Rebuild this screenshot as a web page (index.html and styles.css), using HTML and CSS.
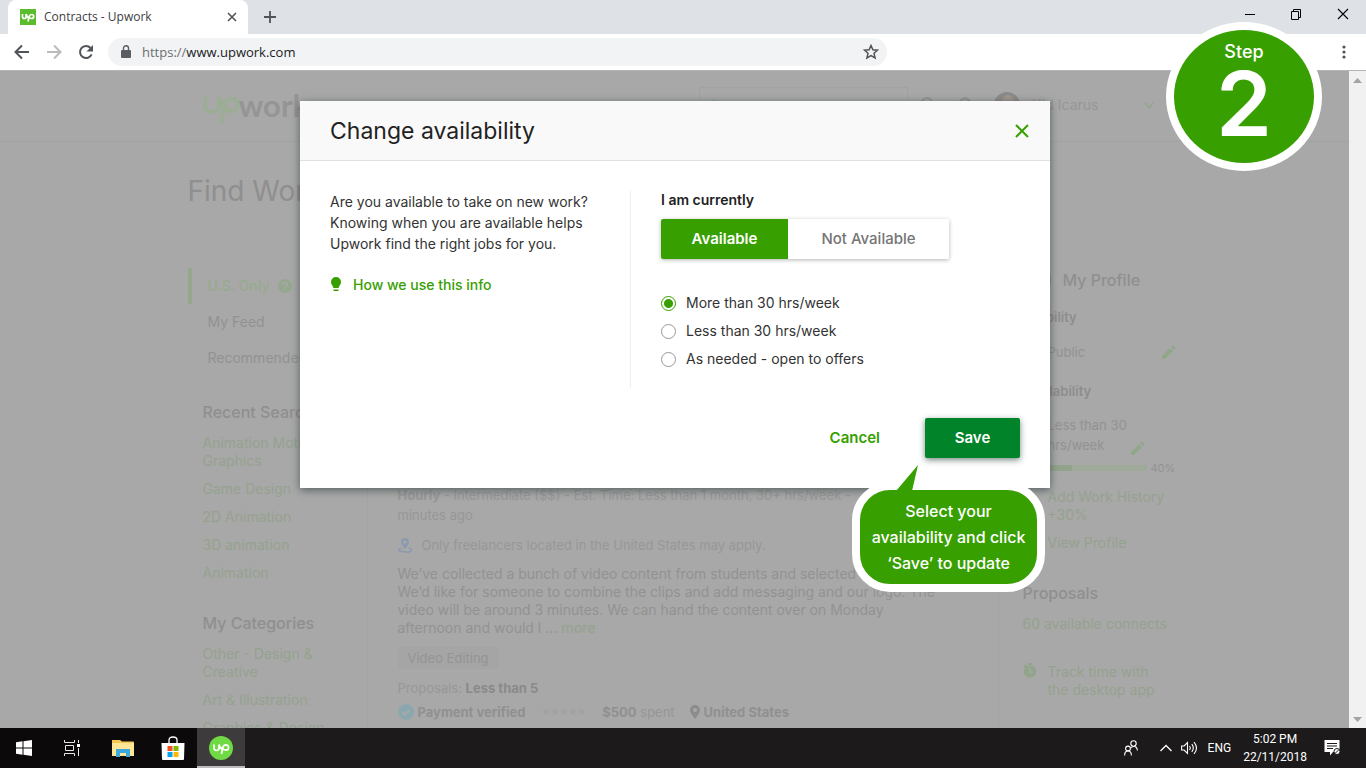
FILE: index.html
```html
<!DOCTYPE html>
<html lang="en">
<head>
<meta charset="utf-8">
<meta name="viewport" content="width=device-width, initial-scale=1">
<title>Contracts - Upwork</title>
<link rel="stylesheet" href="styles.css">
</head>
<body>
<div class="screen">
  <div class="tabstrip">
    <div class="tab">
      <svg class="favicon" viewBox="0 0 16 16" aria-hidden="true"><rect width="16" height="16" fill="#5bbc2e"/><path d="M2.500 5v2.700q0 1.800 1.800 1.800t1.800-1.800V5q.8 2.500 2.600 4.300M8 12.500l1.200-5q.5-2 2.500-2t2 2-2 2q-1.600 0-3.200-1.800" fill="none" stroke="#fff" stroke-width="1.700"/></svg>
      <span class="tab-title">Contracts - Upwork</span>
      <button class="icon-button" aria-label="Close tab"><svg width="10" height="10" viewBox="0 0 10 10"><path d="M1 1l8 8M9 1L1 9" stroke="#505357" stroke-width="1.600"/></svg></button>
    </div>
    <button class="icon-button new-tab" aria-label="New tab"><svg width="12" height="12" viewBox="0 0 12 12"><path d="M6 0v12M0 6h12" stroke="#505357" stroke-width="1.800"/></svg></button>
    <div class="window-controls">
      <button class="icon-button" aria-label="Minimize"><svg width="10" height="12" viewBox="0 0 10 12"><path d="M0 6.500h10" stroke="#000"/></svg></button>
      <button class="icon-button" aria-label="Restore"><svg width="12" height="12" viewBox="0 0 12 12"><path d="M1.500 3.500h7v8h-7zM3.500 3V1.500h7v8H9" fill="none" stroke="#000"/></svg></button>
      <button class="icon-button" aria-label="Close"><svg width="12" height="12" viewBox="0 0 12 12"><path d="M1 1l10 10M11 1L1 11" stroke="#000" stroke-width="1.100"/></svg></button>
    </div>
  </div>
  <div class="toolbar">
    <button class="icon-button" aria-label="Back"><svg width="16" height="16" viewBox="0 0 16 16"><path d="M15 8H2M8 1.500L1.500 8 8 14.500" fill="none" stroke="#505357" stroke-width="2"/></svg></button>
    <button class="icon-button" aria-label="Forward"><svg width="16" height="16" viewBox="0 0 16 16"><path d="M1 8h13M8 1.500L14.500 8 8 14.500" fill="none" stroke="#b9bbbd" stroke-width="2"/></svg></button>
    <button class="icon-button" aria-label="Reload"><svg width="16" height="16" viewBox="0 0 16 16"><path d="M13.600 10.300A6 6 0 1 1 12.500 4" fill="none" stroke="#505357" stroke-width="2"/><path d="M15 1v6.500H8.500z" fill="#505357"/></svg></button>
    <div class="omnibox">
      <svg width="10" height="14" viewBox="0 0 10 14" aria-hidden="true"><path d="M1 5h8q1 0 1 1v6q0 1-1 1H1q-1 0-1-1V6q0-1 1-1z" fill="#5a5d61"/><path d="M2.500 5.500V3.200a2.500 2.500 0 0 1 5 0v2.300" fill="none" stroke="#5a5d61" stroke-width="1.400"/></svg>
      <label class="scheme" for="url">https://</label><input class="url" id="url" type="text" value="www.upwork.com">
      <button class="icon-button" aria-label="Bookmark"><svg width="16" height="16" viewBox="0 0 16 16"><path d="M8 1.500l1.900 4.300 4.600.4L11 9.300l1.100 4.600L8 11.500l-4.100 2.400L5 9.300 1.500 6.200l4.600-.4z" fill="none" stroke="#505357" stroke-width="1.500"/></svg></button>
    </div>
    <button class="icon-button menu" aria-label="Menu"><svg width="4" height="14" viewBox="0 0 4 14"><g fill="#505357"><circle cx="2" cy="2" r="1.600"/><circle cx="2" cy="7" r="1.600"/><circle cx="2" cy="12" r="1.600"/></g></svg></button>
  </div>

  <div class="viewport">
    <div class="page">
      <header class="site-header">
        <div class="container header-row">
          <div class="logo"><svg class="logo-up" width="36" height="30" viewBox="0 0 36 30" aria-label="up"><path d="M2 4v8q0 7 7 7t7-7V4q3 10 9 14.500" fill="none" stroke="#9bad94" stroke-width="4"/><path d="M18 30l3.500-17q1.500-7 7-7t6 6-6 6q-5 0-11-7" fill="none" stroke="#9bad94" stroke-width="4"/></svg><span>work</span></div>
          <div class="header-search"><svg width="14" height="14" viewBox="0 0 14 14"><circle cx="6" cy="6" r="4.500" fill="none" stroke="#96a78f" stroke-width="2"/></svg></div>
          <svg width="18" height="18" viewBox="0 0 18 18"><path d="M4 16V7a5 5 0 0 1 10 0v4" fill="none" stroke="#929292" stroke-width="2"/></svg>
          <svg width="18" height="18" viewBox="0 0 18 18"><path d="M3 14V9q0-5 6-7 6 2 6 7v5" fill="none" stroke="#929292" stroke-width="2"/></svg>
          <svg class="avatar" width="26" height="26" viewBox="0 0 26 26"><circle cx="13" cy="13" r="13" fill="#8b8b8b"/><ellipse cx="14" cy="10" rx="6" ry="7" fill="#a1978f"/></svg>
          <span class="user">Kid Icarus</span>
          <svg width="10" height="7" viewBox="0 0 10 7"><path d="M1 1l4 5 4-5" fill="none" stroke="#95a38d" stroke-width="1.500"/></svg>
        </div>
      </header>
      <div class="container">
        <h1 class="page-title">Find Work</h1>
        <div class="columns">
          <nav class="sidebar">
            <a class="feed active" href="#">U.S. Only <svg width="14" height="14" viewBox="0 0 14 14" aria-hidden="true"><circle cx="7" cy="7" r="7" fill="#95a78d"/><path d="M4.800 5.600q0-2.200 2.200-2.200t2.200 1.900q0 1-1.200 1.600T7 8.500M7 9.600v1.700" fill="none" stroke="#a8a8a8" stroke-width="1.500"/></svg></a>
            <a class="feed" href="#">My Feed</a>
            <a class="feed" href="#">Recommended</a>
            <section class="side-group">
              <h2>Recent Searches</h2>
              <a href="#">Animation Motion Graphics</a>
              <a href="#">Game Design</a>
              <a href="#">2D Animation</a>
              <a href="#">3D animation</a>
              <a href="#">Animation</a>
            </section>
            <section class="side-group">
              <h2>My Categories</h2>
              <a href="#">Other - Design &amp; Creative</a>
              <a href="#">Art &amp; Illustration</a>
              <a href="#">Graphics &amp; Design</a>
            </section>
          </nav>
          <main class="feed-column">
            <p class="meta"><strong>Hourly</strong> - Intermediate ($$) - Est. Time: Less than 1 month, 30+ hrs/week - <br>minutes ago</p>
            <p class="location"><svg width="14" height="15" viewBox="0 0 14 15" aria-hidden="true"><path d="M7 11Q3 6.500 3 4a4 4 0 0 1 8 0q0 2.500-4 7z" fill="#8b9aae"/><circle cx="7" cy="4" r="1.600" fill="#a8a8a8"/><path d="M3.500 10Q.8 10.600.8 12T7 13.900 13.200 12q0-1.400-2.700-2" fill="none" stroke="#8b9aae" stroke-width="1.600"/></svg>Only freelancers located in the United States may apply.</p>
            <p class="description">We’ve collected a bunch of video content from students and selected<br>We’d like for someone to combine the clips and add messaging and our logo. The<br>video will be around 3 minutes. We can hand the content over on Monday<br>afternoon and would l ... <a href="#">more</a></p>
            <span class="chip">Video Editing</span>
            <p class="proposals">Proposals: <strong>Less than 5</strong></p>
            <div class="client">
              <svg width="16" height="16" viewBox="0 0 16 16" aria-hidden="true"><circle cx="8" cy="8" r="7.200" fill="#8aa7b0" stroke="#8aa7b0" stroke-width="1.500" stroke-dasharray="2.500 1"/><path d="M4.500 8l2.500 2.500 4.500-4.500" fill="none" stroke="#a8a8a8" stroke-width="2"/></svg>
              <strong>Payment verified</strong>
              <span class="stars">★★★★★</span>
              <span class="spent"><strong>$500</strong> spent</span>
              <svg class="pin" width="10" height="14" viewBox="0 0 10 14" aria-hidden="true"><path d="M5 14Q0 8 0 5a5 5 0 0 1 10 0q0 3-5 9z" fill="#8c8c8c"/><circle cx="5" cy="5" r="2" fill="#a8a8a8"/></svg>
              <strong>United States</strong>
            </div>
          </main>
          <aside class="profile">
            <h2 class="profile-title"><svg width="29" height="29" viewBox="0 0 29 29" aria-hidden="true"><circle cx="14" cy="14" r="14" fill="#929292"/></svg>My Profile</h2>
            <h3>Visibility</h3>
            <p class="setting setting-wide"><span>Public</span><svg width="14" height="14" viewBox="0 0 14 14"><path d="M0 11l8-8 3 3-8 8H0zM9 2l2-2 3 3-2 2z" fill="#92a78a"/></svg></p>
            <h3>Availability</h3>
            <p class="setting"><span>Less than 30<br>hrs/week</span><svg class="edit-low" width="14" height="14" viewBox="0 0 14 14"><path d="M0 11l8-8 3 3-8 8H0zM9 2l2-2 3 3-2 2z" fill="#92a78a"/></svg></p>
            <div class="progress-row"><div class="progress"><div class="progress-fill" style="width:40%"></div></div>40%</div>
            <a class="indent" href="#">Add Work History<br>+30%</a>
            <a class="indent" href="#">View Profile</a>
            <h2 class="proposals-title">Proposals</h2>
            <a href="#">60 available connects</a>
            <a class="tracker" href="#"><svg width="14" height="15" viewBox="0 0 14 15" aria-hidden="true"><circle cx="7" cy="8.500" r="6.200" fill="#92a48c"/><path d="M4.500 1h5M1 4l2-2" stroke="#92a48c" stroke-width="2"/><path d="M7 5v4h3" fill="none" stroke="#a8a8a8" stroke-width="1.300"/></svg><span>Track time with<br>the desktop app</span></a>
          </aside>
        </div>
      </div>
    </div>
    <div class="scrollbar"><svg width="9" height="5" viewBox="0 0 9 5"><path d="M0 5l4.500-5L9 5z" fill="#a3a3a3"/></svg><svg width="9" height="5" viewBox="0 0 9 5"><path d="M0 0h9L4.500 5z" fill="#a3a3a3"/></svg></div>

    <div class="overlay">
      <form class="modal" role="dialog" aria-labelledby="modal-title">
        <div class="modal-header">
          <h2 class="modal-title" id="modal-title">Change availability</h2>
          <button type="button" class="icon-button" aria-label="Close dialog"><svg width="16" height="16" viewBox="0 0 16 16"><path d="M2 2l12 12M14 2L2 14" stroke="#37a000" stroke-width="2"/></svg></button>
        </div>
        <div class="modal-body">
          <div class="intro">
            <p>Are you available to take on new work?<br>Knowing when you are available helps<br>Upwork find the right jobs for you.</p>
            <a class="info-link" href="#"><svg width="12" height="15" viewBox="0 0 12 15" aria-hidden="true"><path d="M6 0a5 5 0 0 1 5 5q0 2-1.500 3.700L8.500 11h-5l-1-2.300Q1 7 1 5a5 5 0 0 1 5-5zM3.500 12.500h5V14h-5z" fill="#37a000"/></svg>How we use this info</a>
          </div>
          <div class="options">
            <div class="options-label">I am currently</div>
            <div class="segmented">
              <button type="button" class="segment selected" aria-pressed="true">Available</button><button type="button" class="segment" aria-pressed="false">Not Available</button>
            </div>
            <div class="radios">
              <label class="radio"><input type="radio" name="hours" checked>More than 30 hrs/week</label>
              <label class="radio"><input type="radio" name="hours">Less than 30 hrs/week</label>
              <label class="radio"><input type="radio" name="hours">As needed - open to offers</label>
            </div>
          </div>
        </div>
        <div class="modal-footer">
          <button type="button" class="cancel">Cancel</button>
          <button type="button" class="save">Save</button>
        </div>
        <div class="callout">
          <svg class="callout-tail" width="60" height="56" viewBox="0 0 60 56" aria-hidden="true"><path d="M10 50L42 12 34 50z" fill="#fff" stroke="#fff" stroke-width="16" stroke-linejoin="round"/></svg>
          <div class="callout-text">Select your<br>availability and click<br>‘Save’ to update</div>
          <svg class="callout-tail" width="60" height="56" viewBox="0 0 60 56" aria-hidden="true"><path d="M20 38L42 12 36 38z" fill="#37a000"/></svg>
        </div>
      </form>
    </div>
  </div>

  <div class="step"><span class="step-label">Step</span><span class="step-number">2</span></div>

  <footer class="taskbar">
    <button class="task" aria-label="Start"><svg width="16" height="16" viewBox="0 0 16 16"><path d="M0 2.200L6.500 1.300v6.200H0zM7.500 1.200L16 0v7.500H7.500zM0 8.500h6.500v6.200L0 13.800zM7.500 8.500H16V16l-8.500-1.200z" fill="#fff"/></svg></button>
    <button class="task" aria-label="Task view"><svg width="16" height="16" viewBox="0 0 16 16"><path d="M.5 0v2.500h10V0M.5 16v-2.500h10V16M1.500 5.500h8v5h-8zM14.500 0v3M14.500 8v8" fill="none" stroke="#e8e8e8"/><path d="M13 4h3v3h-3z" fill="#fff"/></svg></button>
    <button class="task task-wide" aria-label="File Explorer"><svg width="22" height="18" viewBox="0 0 22 18"><path d="M0 1h8l2 1.500h11q1 0 1 1V17H0z" fill="#f5c852"/><path d="M0 4h22v13H0z" fill="#ffe596"/><path d="M4 18v-8h14v8h-4v-4H8v4z" fill="#3ba9dd"/></svg></button>
    <button class="task" aria-label="Store"><svg width="24" height="24" viewBox="0 0 24 24"><path d="M8 8V4q0-3 4-3t4 3v4" fill="none" stroke="#fff" stroke-width="1.300"/><path d="M.5 7h23l-.5 16q0 1-1 1H2q-1 0-1-1z" fill="#fff"/><path d="M6.500 10h5v5h-5z" fill="#f25022"/><path d="M12.500 10h5v5h-5z" fill="#7fba00"/><path d="M6.500 16h5v5h-5z" fill="#00a4ef"/><path d="M12.500 16h5v5h-5z" fill="#ffb900"/></svg></button>
    <button class="task task-active" aria-label="Upwork"><svg width="24" height="24" viewBox="0 0 24 24"><circle cx="12" cy="12" r="12" fill="#6fda44"/><path d="M5 8.500v3.300q0 2.700 2.500 2.700t2.500-2.700V8.500q1 4 4 5.500M12.500 18l1.200-6q.6-3.200 3.200-3.200t2.600 2.700-2.600 2.700q-2.400 0-4.400-3" fill="none" stroke="#fff" stroke-width="1.700"/></svg></button>
    <div class="tray">
      <svg width="14" height="16" viewBox="0 0 14 16" aria-hidden="true"><g fill="none" stroke="#fff" stroke-width="1.100"><circle cx="9.500" cy="3.500" r="2.700"/><circle cx="4" cy="8.500" r="2.400"/><path d="M.6 15.500q0-4.500 3.400-4.500t3.400 4.500M7 8q1-1.700 3-1.500 3 0 3.400 4"/></g></svg>
      <svg class="tray-caret" width="12" height="8" viewBox="0 0 12 8" aria-hidden="true"><path d="M.5 7L6 1.500 11.500 7" fill="none" stroke="#fff" stroke-width="1.300"/></svg>
      <svg width="18" height="14" viewBox="0 0 18 14" aria-hidden="true"><path d="M.6 5v4h2.500L6.500 12.500V1.500L3.100 5zM8.500 5q1.500 2 0 4M10.800 3.200q3 3.800 0 7.600M13 1.200q5 5.800 0 11.600" fill="none" stroke="#fff" stroke-width="1.100"/></svg>
      <span>ENG</span>
      <time class="clock">5:02 PM<br>22/11/2018</time>
      <svg class="tray-note" width="17" height="16" viewBox="0 0 17 16" aria-hidden="true"><path d="M.5 0h15v12H9l-3 3.500V12H.5z" fill="#fff"/><path d="M3 3.500h10M3 6h10M3 8.500h6" stroke="#1b191a"/><circle cx="13" cy="11.500" r="3" fill="#fff" stroke="#1b191a"/><path d="M11 13.500l4-4" stroke="#1b191a"/></svg>
    </div>
  </footer>
</div>
</body>
</html>
```
FILE: styles.css
```css
* { box-sizing: border-box; }
body, h1, h2, h3, p { margin: 0; }
body { font: 14px/18px "Inter", "Noto Sans", sans-serif; color: #222; }
button { font: inherit; color: inherit; border: 0; background: none; padding: 0; }
a { text-decoration: none; color: inherit; }
svg { display: block; flex: none; }

.screen { position: relative; height: 100vh; display: flex; flex-direction: column; overflow: hidden; }
.icon-button { display: flex; align-items: center; justify-content: center; }

/* Browser frame */
.tabstrip { display: flex; align-items: stretch; height: 34px; padding-left: 8px; background: #dee1e6; font: 12px/16px "Open Sans", sans-serif; color: #3c4043; }
.tab { width: 240px; display: flex; align-items: center; gap: 8px; padding: 0 11px 0 12px; background: #fff; border-radius: 8px 8px 0 0; }
.favicon { width: 16px; height: 16px; }
.tab-title { flex: 1; }
.new-tab { margin-left: 16px; }
.window-controls { display: flex; gap: 35px; margin-left: auto; padding: 0 17px 6px 0; }
.toolbar { display: flex; align-items: center; gap: 16px; height: 36px; padding: 0 20px 0 14px; background: #fff; font: 13px/18px "Open Sans", sans-serif; }
.omnibox { flex: none; width: 57vw; display: flex; align-items: center; height: 28px; margin-left: -2px; padding: 0 8px 0 13px; border-radius: 14px; background: #f1f3f4; }
.scheme { margin-left: 11px; color: #6b6f73; }
.url { flex: 1; min-width: 0; border: 0; padding: 0; background: none; font: inherit; color: #202124; }
.menu { margin-left: auto; }

/* Web page */
.viewport { position: relative; flex: 1; min-height: 0; display: flex; overflow: hidden; border-top: 1px solid #b4b4b4; background: #a8a8a8; }
.page { flex: 1; color: #969696; }
.container { max-width: 974px; margin: 0 auto; }
.site-header { border-bottom: 1px solid #a0a3a0; }
.header-row { display: flex; align-items: center; height: 70px; padding: 0 8px 2px 15px; gap: 20px; }
.logo { display: flex; align-items: flex-end; font: bold 31px/28px "Lato", sans-serif; color: #959595; }
.logo-up { margin-bottom: -4px; }
.header-search { width: 209px; height: 36px; margin: 0 -10px 0 auto; padding: 11px 8px; border: 1px solid #a2a2a2; }
.avatar { margin-right: -8px; }
.user { margin-right: 25px; }
.page-title { padding: 32px 0 60px; font-size: 28px; line-height: 34px; font-weight: 400; color: #8f8f8f; }
.columns { display: grid; grid-template-columns: 179px 632px 1fr; }
.sidebar { min-height: 470px; display: flex; flex-direction: column; }
.feed { display: flex; align-items: center; gap: 8px; height: 36px; padding-left: 20px; color: #929292; white-space: nowrap; }
.feed.active { padding-left: 16px; border-left: 4px solid #95a88d; font-weight: 600; color: #98aa91; }
.side-group { display: flex; flex-direction: column; gap: 10px; padding: 27px 20px 6px 15px; color: #95a28e; }
.side-group h2 { margin-bottom: 3px; white-space: nowrap; }
.side-group + .side-group { padding-top: 26px; }
.side-group h2, .profile h2 { font-size: 16px; line-height: 18px; font-weight: 500; color: #8f8f8f; }

.feed-column { padding: 217px 0 0 30px; border: solid #a3a3a3; border-width: 0 1px; font-size: 13px; white-space: nowrap; }
.meta { line-height: 20px; }
.meta, .location, .proposals { color: #979797; }
.location { display: flex; align-items: center; gap: 10px; margin: 11px 0; }
.description { font-size: 14px; color: #929292; }
.description a { color: #95a48e; font-weight: 500; }
.chip { display: inline-block; margin: 10px 0; padding: 2px 10px; border-radius: 3px; background: #a5a5a5; color: #949494; }
.client { display: flex; align-items: center; margin-top: 6px; }
.proposals strong, .spent strong { color: #8a8a8a; }
.client strong { margin-left: 4px; color: #909090; }
.client .spent { margin: 0 15px 0 12px; }
.stars { margin-left: 16px; font: 10px/18px "DejaVu Sans", sans-serif; color: #a0a0a0; }

.profile { display: flex; flex-direction: column; padding-left: 24px; color: #95a28e; }
.profile-title { display: flex; align-items: center; gap: 11px; height: 24px; }
.profile h3 { margin: 16px 0; font-size: 13px; line-height: 18px; font-weight: 600; color: #8d8d8d; }
.setting { display: flex; align-items: center; justify-content: space-between; width: 97px; margin-left: 25px; line-height: 20px; font-size: 13px; color: #929292; }
.setting-wide { width: 128px; }
.setting-wide + h3 { margin: 20px 0 15px; }
.edit-low { align-self: flex-end; }
.progress-row { display: flex; align-items: center; gap: 4px; margin: 4px 0 11px; font-size: 11px; color: #929292; }
.progress { width: 124px; height: 6px; background: #a0aa9b; }
.progress-fill { height: 100%; background: #93a38b; }
.indent { margin: 0 0 10px 25px; }
.profile .proposals-title { margin: 22px 0 13px; }
.tracker { display: flex; gap: 11px; margin-top: 30px; }
.scrollbar { width: 17px; display: flex; flex-direction: column; align-items: center; justify-content: space-between; padding: 7px 0 6px; background: #f1f1f1; }

/* Availability dialog */
.overlay { position: absolute; inset: 0 17px 0 0; padding: 30px 0 0 1px; }
.modal { position: relative; max-width: 750px; margin: 0 auto; background: #fff; box-shadow: 0 2px 8px rgba(30, 45, 45, .6); font-size: 14px; }
.modal-header { display: flex; align-items: center; justify-content: space-between; height: 60px; padding: 0 20px 0 30px; border-bottom: 1px solid #e0e0e0; background: #f9f9f9; }
.modal-title { font-size: 23px; line-height: 30px; font-weight: 400; }
.modal-body { display: flex; padding: 30px; }
.intro { width: 301px; min-height: 197px; border-right: 1px solid #eee; line-height: 21px; color: #333; }
.info-link { display: flex; align-items: center; gap: 11px; margin-top: 20px; color: #37a000; font-weight: 500; }
.options { padding-left: 30px; }
.options-label { line-height: 18px; font-weight: 600; }
.segmented { display: flex; margin-top: 10px; width: 288px; height: 40px; border-radius: 2px; box-shadow: 0 1px 4px rgba(0, 0, 0, .3); }
.segment { flex: 1; color: #757575; font-size: 15px; font-weight: 500; background: #fff; border-radius: 0 2px 2px 0; }
.segment.selected { flex: 0 0 127px; background: #37a000; color: #fff; font-weight: 600; border-radius: 2px 0 0 2px; }
.radios { display: flex; flex-direction: column; gap: 10px; margin-top: 35px; color: #333; }
.radio { display: flex; align-items: center; gap: 10px; }
.radio input { appearance: none; width: 15px; height: 15px; margin: 0; border: 1px solid #999; border-radius: 50%; background: #fff; }
.radio input:checked { border-color: #37a000; background: radial-gradient(circle, #37a000 4px, #fff 5px); }
.modal-footer { display: flex; justify-content: flex-end; gap: 45px; padding: 0 30px 30px; font-size: 15px; font-weight: 600; }
.cancel { color: #37a000; }
.save { width: 95px; height: 40px; border-radius: 2px; background: #008329; color: #fff; box-shadow: 0 2px 6px rgba(0, 40, 30, .55); }

/* Tutorial annotations */
.callout { position: absolute; top: calc(100% - 6px); right: 5px; width: 193px; }
.callout-text { padding: 8px 0; border: 8px solid #fff; border-radius: 38px; background: #37a000; color: #fff; font-size: 16px; line-height: 26px; font-weight: 500; text-align: center; white-space: nowrap; }
.callout-tail { position: absolute; left: 24px; top: -29px; }
.callout-tail:first-child { z-index: -1; }
.step { position: absolute; top: 22px; right: 44px; width: 156px; height: 149px; display: flex; flex-direction: column; align-items: center; padding-top: 12px; border: 8px solid #fff; border-radius: 50%; background: #37a000; color: #fff; }
.step-label { font-size: 18px; line-height: 20px; font-weight: 500; }
.step-number { font-size: 90px; line-height: 84px; font-weight: 600; }

/* Taskbar */
.taskbar { flex: none; display: flex; height: 40px; background: linear-gradient(90deg, #0b090a 245px, #1c1a1b 245px); color: #fff; font: 12px/18px "Roboto", sans-serif; }
.task { width: 48px; display: flex; align-items: center; justify-content: center; }
.task-wide { width: 53px; }
.task-active { background: #3d3b3c; border-bottom: 2px solid #bdbdbd; padding-top: 2px; }
.tray { display: flex; align-items: center; gap: 9px; margin-left: auto; padding-right: 25px; }
.tray-caret { margin-left: 13px; }
.clock { margin-left: 3px; text-align: center; }
.tray-note { margin-left: 8px; }
```
